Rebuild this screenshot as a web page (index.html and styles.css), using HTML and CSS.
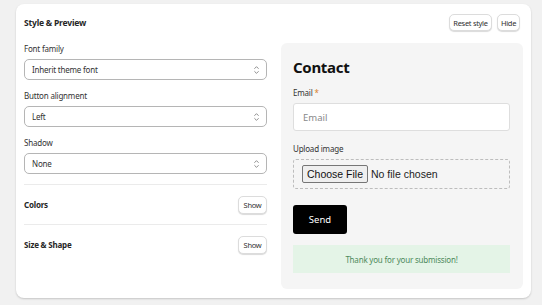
FILE: index.html
```html
<!DOCTYPE html>
<html lang="en">
<head>
    <meta charset="UTF-8">
    <meta name="viewport" content="width=device-width, initial-scale=1.0">
    <title>Style &amp; Preview</title>
    <link rel="stylesheet" href="styles.css">
</head>
<body>
    <div class="card">
        <div class="head">
            <h2 class="title">Style &amp; Preview</h2>
            <div class="actions">
                <button class="btn reset">Reset style</button>
                <button class="btn hide">Hide</button>
            </div>
        </div>
        <div class="cols">
            <div class="settings">
                <div class="field">
                    <label>Font family</label>
                    <div class="select">Inherit theme font<svg viewBox="0 0 8 12" class="arrows"><path d="M1.5 4.5 4 2l2.5 2.5M1.5 7.5 4 10l2.5-2.5"/></svg></div>
                </div>
                <div class="field">
                    <label>Button alignment</label>
                    <div class="select">Left<svg viewBox="0 0 8 12" class="arrows"><path d="M1.5 4.5 4 2l2.5 2.5M1.5 7.5 4 10l2.5-2.5"/></svg></div>
                </div>
                <div class="field">
                    <label>Shadow</label>
                    <div class="select">None<svg viewBox="0 0 8 12" class="arrows"><path d="M1.5 4.5 4 2l2.5 2.5M1.5 7.5 4 10l2.5-2.5"/></svg></div>
                </div>
                <div class="section">
                    <span>Colors</span>
                    <button class="btn show">Show</button>
                </div>
                <div class="section">
                    <span>Size &amp; Shape</span>
                    <button class="btn show">Show</button>
                </div>
            </div>
            <div class="preview">
                <h1>Contact</h1>
                <label class="plabel">Email <span class="req">*</span></label>
                <div class="input">Email</div>
                <label class="plabel">Upload image</label>
                <div class="upload"><span class="choose">Choose File</span>No file chosen</div>
                <button class="send">Send</button>
                <div class="thanks">Thank you for your submission!</div>
            </div>
        </div>
    </div>
</body>
</html>
```

FILE: styles.css
```css
body{margin: 0;background-color: #f1f1f1;font-family: 'Noto Sans', sans-serif;color: #262626;padding: 4px 11px 7px 16px;}

.card{
    width: 515px;
    height: 294px;
    box-sizing: border-box;
    background-color: #fff;
    border-radius: 8px;
    box-shadow: 0 1px 2px rgba(0,0,0,.18);
    padding: 10px 8px 0 8px;
}
.head{
    display: flex;
    justify-content: space-between;
    align-items: center;
    height: 17px;
    margin-bottom: 12px;
    padding-right: 3px;
}
.title{
    margin: 0;
    font-size: 8.5px;
    font-weight: 700;
    letter-spacing: -.2px;
}
.actions{
    display: flex;
    gap: 5px;
}
.btn{
    height: 17px;
    padding: 0;
    background-color: #fff;
    border: 1px solid #dcdcdc;
    border-radius: 5px;
    box-shadow: 0 1px 1px rgba(0,0,0,.15);
    font-family: 'Noto Sans', sans-serif;
    font-size: 7.5px;
    letter-spacing: -.3px;
    color: #303030;
}
.reset{
    width: 43px;
}
.hide{
    width: 23px;
}
.cols{
    display: flex;
    gap: 14px;
}
.settings{
    width: 243px;
}
.field{
    display: flex;
    flex-direction: column;
    gap: 5px;
    margin-bottom: 10px;
}
.field label{
    height: 11px;
    font-size: 8px;
    line-height: 11px;
    letter-spacing: -.2px;
    color: #333;
}
.select{
    height: 21px;
    box-sizing: border-box;
    border: 1px solid #b5b5b5;
    border-radius: 5px;
    display: flex;
    align-items: center;
    justify-content: space-between;
    padding: 0 6px 0 7px;
    font-size: 8px;
    letter-spacing: -.2px;
    color: #333;
}
.arrows{
    width: 7px;
    height: 10px;
    fill: none;
    stroke: #777;
    stroke-width: 1;
}
.section{
    border-top: 1px solid #ebebeb;
    height: 39px;
    display: flex;
    align-items: center;
    justify-content: space-between;
    font-size: 8px;
    font-weight: 700;
    letter-spacing: -.2px;
}
.settings .field:last-of-type{
    margin-bottom: 11px;
}
.show{
    height: 18px;
    width: 29px;
    font-weight: 400;
}
.preview{
    width: 242px;
    height: 246px;
    box-sizing: border-box;
    background-color: #f5f5f5;
    border-radius: 6px;
    padding: 14px 13px 0 12px;
    display: flex;
    flex-direction: column;
}
.preview h1{
    margin: 0 0 10px 0;
    font-size: 15px;
    line-height: 20px;
    font-weight: 700;
    letter-spacing: -.3px;
    color: #111;
}
.plabel{
    font-size: 8px;
    line-height: 11px;
    letter-spacing: -.2px;
    color: #333;
    margin-bottom: 5px;
}
.req{
    color: #d9822b;
}
.input{
    height: 28px;
    box-sizing: border-box;
    background-color: #fff;
    border: 1px solid #dedede;
    border-radius: 3px;
    padding-left: 9px;
    display: flex;
    align-items: center;
    font-size: 9.5px;
    color: #888;
    margin-bottom: 12px;
}
.upload{
    height: 30px;
    box-sizing: border-box;
    border: 1px dashed #bdbdbd;
    border-radius: 3px;
    padding-left: 8px;
    display: flex;
    align-items: center;
    font-family: 'Liberation Sans', Arial, sans-serif;
    font-size: 10.5px;
    color: #222;
    margin-bottom: 16px;
}
.choose{
    background-color: #efefef;
    border: 1px solid #767676;
    border-radius: 2px;
    padding: 2px 4px;
    margin-right: 3px;
    color: #111;
}
.send{
    align-self: flex-start;
    width: 54px;
    height: 29px;
    background-color: #000;
    color: #fff;
    border: none;
    border-radius: 3px;
    font-family: 'Noto Sans', sans-serif;
    font-size: 9.5px;
    margin-bottom: 11px;
}
.thanks{
    height: 28px;
    background-color: #e4f4e7;
    color: #4d8a5b;
    font-size: 8px;
    letter-spacing: -.2px;
    display: flex;
    align-items: center;
    justify-content: center;
}
```
